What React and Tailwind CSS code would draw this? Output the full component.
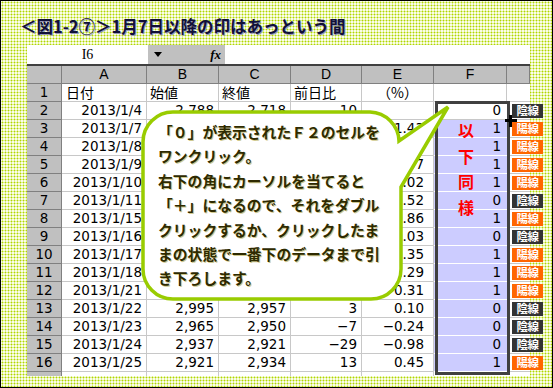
import React from "react";

// [date, open, close, diff, pct, flag]
const data = [
  ["2013/1/4", "2,788", "2,718", "10", "", 0],
  ["2013/1/7", "2,730", "2,757", "39", "1.43", 1],
  ["2013/1/8", "2,745", "2,771", "14", "0.51", 1],
  ["2013/1/9", "2,760", "2,773", "2", "0.07", 1],
  ["2013/1/10", "2,765", "2,774", "1", "0.02", 1],
  ["2013/1/11", "2,802", "2,788", "14", "0.52", 0],
  ["2013/1/15", "2,790", "2,812", "24", "0.86", 1],
  ["2013/1/16", "2,875", "2,869", "1", "0.03", 0],
  ["2013/1/17", "2,866", "2,879", "10", "0.35", 1],
  ["2013/1/18", "2,900", "2,945", "66", "2.29", 1],
  ["2013/1/21", "2,940", "2,954", "9", "0.31", 1],
  ["2013/1/22", "2,995", "2,957", "3", "0.10", 0],
  ["2013/1/23", "2,965", "2,950", "−7", "−0.24", 0],
  ["2013/1/24", "2,937", "2,921", "−29", "−0.98", 0],
  ["2013/1/25", "2,921", "2,934", "13", "0.45", 1],
];

const letters = ["A", "B", "C", "D", "E", "F", ""];

const bubbleLines = [
  "「０」が表示されたＦ２のセルを",
  "ワンクリック。",
  "右下の角にカーソルを当てると",
  "「＋」になるので、それをダブル",
  "クリックするか、クリックしたま",
  "まの状態で一番下のデータまで引",
  "き下ろします。",
];

const Badge = ({ up }) => (
  <div
    className={
      "absolute left-[5px] top-[2px] w-[31px] h-[14px] text-white font-bold text-[11.5px] leading-[14px] text-center tracking-[-0.5px] " +
      (up ? "bg-[#ff6600]" : "bg-[#333333]")
    }
  >
    {up ? "陽線" : "陰線"}
  </div>
);

const Sheet = () => {
  return (
    <div className="ml-[26px] w-[503px] font-['DejaVu_Sans','Noto_Sans_CJK_JP',sans-serif] text-[13.5px] text-black">
      {/* formula bar */}
      <div className="flex h-[19px]">
        <div className="w-[121px] bg-white text-center font-['Liberation_Serif',serif] text-[14px] leading-[19px]">
          I6
        </div>
        <div className="w-[77px] bg-[#c0c0c0] flex items-center justify-between pl-[6px] pr-[4px]">
          <svg width="8" height="5" viewBox="0 0 8 5">
            <path d="M0 0H8L4 5Z" fill="#000" />
          </svg>
          <span className="font-['Liberation_Serif',serif] italic font-bold text-[13px] leading-[19px]">
            fx
          </span>
        </div>
        <div className="flex-1 bg-white" />
      </div>
      <div className="h-[2px] bg-[#404040]" />

      {/* grid */}
      <div className="grid grid-cols-[35px_85px_72px_72px_71px_72px_73px_23px] auto-rows-[18px] leading-[17px]">
        <div className="bg-[#c0c0c0] border-r border-b border-[#808080]" />
        {letters.map((l, i) => (
          <div
            key={"h" + i}
            className="bg-[#c0c0c0] border-r border-b border-[#808080] text-center font-['Liberation_Sans',sans-serif] text-[14px]"
          >
            {l}
          </div>
        ))}

        {/* row 1 */}
        <div className="bg-[#c0c0c0] border-r border-b border-[#808080] text-center">1</div>
        <div className="bg-white border-r border-b border-[#c8c8c8] pl-[4px] font-['Noto_Sans_CJK_JP',sans-serif] text-[14px]">日付</div>
        <div className="bg-white border-r border-b border-[#c8c8c8] pl-[3px] font-['Noto_Sans_CJK_JP',sans-serif] text-[14px]">始値</div>
        <div className="bg-white border-r border-b border-[#c8c8c8] pl-[3px] font-['Noto_Sans_CJK_JP',sans-serif] text-[14px]">終値</div>
        <div className="bg-white border-r border-b border-[#c8c8c8] pl-[3px] font-['Noto_Sans_CJK_JP',sans-serif] text-[14px]">前日比</div>
        <div className="bg-white border-r border-b border-[#c8c8c8] text-center font-['Noto_Sans_CJK_JP',sans-serif] text-[14px]">（%）</div>
        <div className="bg-white border-r border-b border-[#c8c8c8]" />
        <div className="bg-white border-b border-[#c8c8c8]" />

        {data.map((r, i) => (
          <React.Fragment key={i}>
            <div className="bg-[#c0c0c0] border-r border-b border-[#808080] text-center">{i + 2}</div>
            <div className="bg-white border-r border-b border-[#c8c8c8] text-right pr-[4px]">{r[0]}</div>
            <div className="bg-white border-r border-b border-[#c8c8c8] text-right pr-[4px]">{r[1]}</div>
            <div className="bg-white border-r border-b border-[#c8c8c8] text-right pr-[4px]">{r[2]}</div>
            <div className="bg-white border-r border-b border-[#c8c8c8] text-right pr-[4px]">{r[3]}</div>
            <div className="bg-white border-r border-b border-[#c8c8c8] text-right pr-[9px]">{r[4]}</div>
            <div
              className={
                "border-b text-right pr-[6px] " +
                (i === 0 ? "bg-white border-[#c8c8c8]" : "bg-[#ccccff] border-white")
              }
            >
              {r[5]}
            </div>
            <div className="relative bg-white border-b border-[#c8c8c8]">
              <Badge up={r[5] === 1} />
            </div>
          </React.Fragment>
        ))}

        {/* partial row 17 */}
        <div className="h-[4px] bg-[#c0c0c0] border-r border-[#808080]" />
        <div className="h-[4px] bg-white border-r border-[#c8c8c8]" />
        <div className="h-[4px] bg-white border-r border-[#c8c8c8]" />
        <div className="h-[4px] bg-white border-r border-[#c8c8c8]" />
        <div className="h-[4px] bg-white border-r border-[#c8c8c8]" />
        <div className="h-[4px] bg-white border-r border-[#c8c8c8]" />
        <div className="h-[4px] bg-white" />
        <div className="h-[4px] bg-white" />
      </div>
    </div>
  );
};

export default function App() {
  return (
    <div className="relative w-[553px] h-[388px] overflow-hidden border border-black bg-[#fafde8] [background-image:radial-gradient(circle,#b0d600_0.85px,transparent_1.1px)] [background-size:3px_3px]">
      <div className="h-[44px] pl-[19px] pt-[14px] text-[16.5px] leading-[22px] font-semibold text-[#101038] font-['Noto_Sans_CJK_JP',sans-serif] [text-shadow:1px_1px_0_#9a9ab8]">
        ＜図1-2⑦＞1月7日以降の印はあっという間
      </div>

      <div className="h-[340px]">
        <Sheet />
      </div>

      {/* selection box on F2:F16 */}
      <div className="absolute left-[434px] top-[100px] w-[75px] h-[274px] border-[3px] border-[#404040] pointer-events-none" />

      {/* fill handle cursor */}
      <div className="absolute left-[504px] top-[118px] w-[12px] h-[3px] bg-black" />
      <div className="absolute left-[508px] top-[114px] w-[3px] h-[12px] bg-black" />

      {/* 以下同様 */}
      <div className="absolute left-[457px] top-[117px] flex flex-col text-[16px] leading-[25.7px] font-bold text-[#ff0000] font-['Noto_Sans_CJK_JP',sans-serif]">
        <span>以</span>
        <span>下</span>
        <span>同</span>
        <span>様</span>
      </div>

      {/* speech bubble */}
      <svg
        className="absolute left-[-1px] top-[-1px] pointer-events-none"
        width="553"
        height="388"
        viewBox="0 0 553 388"
      >
        <path
          d="M173 112 H370 A30 30 0 0 1 399 141 L448 107 L401 187 V269 A30 30 0 0 1 371 299 H173 A30 30 0 0 1 143 269 V142 A30 30 0 0 1 173 112 Z"
          fill="#ffffff"
          stroke="#99cc00"
          strokeWidth="3.5"
          strokeLinejoin="miter"
        />
      </svg>
      <div className="absolute left-[157px] top-[119px] text-[14.8px] leading-[24.4px] font-bold text-[#2e2a00] font-['Noto_Sans_CJK_JP',sans-serif] whitespace-nowrap [text-shadow:1px_1px_0_#cfc98f]">
        {bubbleLines.map((l, i) => (
          <div key={i}>{l}</div>
        ))}
      </div>
    </div>
  );
}
